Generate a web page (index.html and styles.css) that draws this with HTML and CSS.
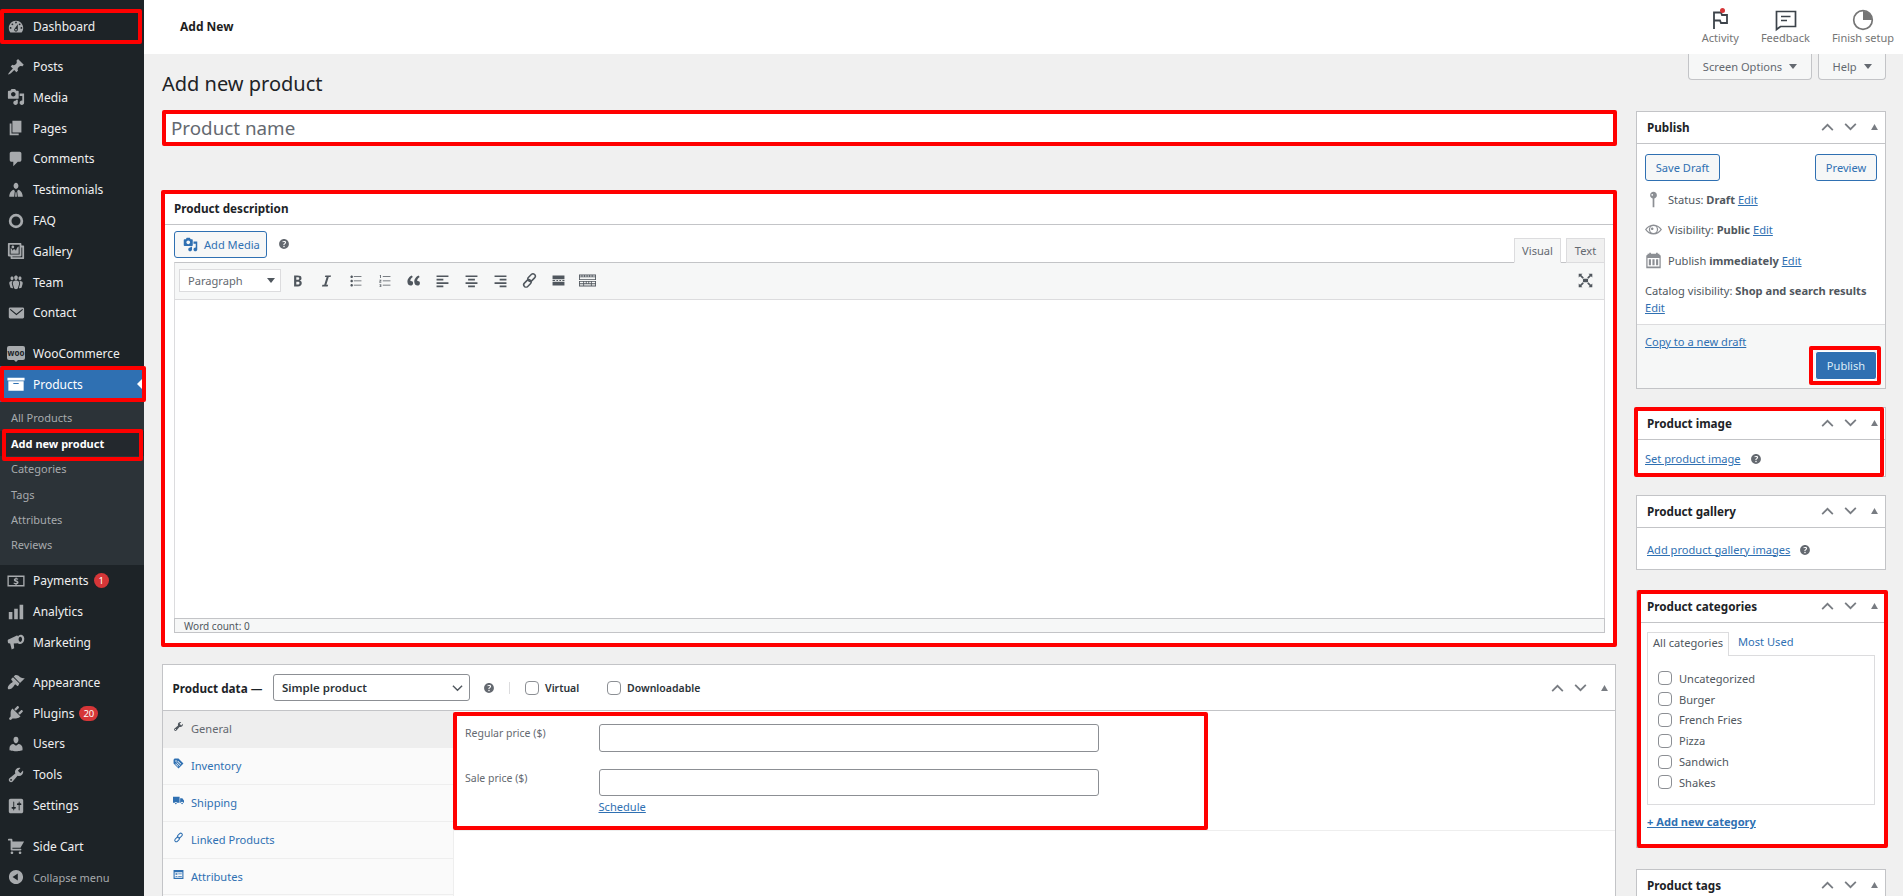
FILE: index.html
```html
<!DOCTYPE html>
<html lang="en">
<head>
<meta charset="utf-8">
<title>Add new product</title>
<link rel="stylesheet" href="styles.css">
</head>
<body>
<svg class="sprite" xmlns="http://www.w3.org/2000/svg">
  <symbol id="i-dashboard" viewBox="0 0 20 20"><path d="M3.76 16h12.48c1.1-1.37 1.76-3.11 1.76-5 0-4.42-3.58-8-8-8s-8 3.58-8 8c0 1.89.66 3.63 1.76 5zM10 4c.55 0 1 .45 1 1s-.45 1-1 1-1-.45-1-1 .45-1 1-1zM6 6c.55 0 1 .45 1 1s-.45 1-1 1-1-.45-1-1 .45-1 1-1zm8 0c.55 0 1 .45 1 1s-.45 1-1 1-1-.45-1-1 .45-1 1-1zm-5.37 5.55L12 7v6c0 1.1-.9 2-2 2s-2-.9-2-2c0-.57.24-1.08.63-1.45zM4 10c.55 0 1 .45 1 1s-.45 1-1 1-1-.45-1-1 .45-1 1-1zm12 0c.55 0 1 .45 1 1s-.45 1-1 1-1-.45-1-1 .45-1 1-1zm-5 3c0-.55-.45-1-1-1s-1 .45-1 1 .45 1 1 1 1-.45 1-1z"/></symbol>
  <symbol id="i-pin" viewBox="0 0 20 20"><path d="M10.44 3.02l1.82-1.82 6.36 6.35-1.83 1.82c-1.05-.68-2.48-.57-3.41.36l-.75.75c-.92.93-1.04 2.35-.35 3.41l-1.83 1.82-2.41-2.41-2.8 2.79c-.42.42-3.38 2.71-3.8 2.29s1.86-3.39 2.28-3.81l2.79-2.79L4.1 9.36l1.83-1.82c1.05.69 2.48.57 3.4-.36l.75-.75c.93-.92 1.05-2.35.36-3.41z"/></symbol>
  <symbol id="i-media" viewBox="0 0 20 20"><path fill-rule="evenodd" d="M13 11V4c0-.55-.45-1-1-1h-1.67L9 1H5L3.67 3H2c-.55 0-1 .45-1 1v7c0 .55.45 1 1 1h10c.55 0 1-.45 1-1zM7 4.5c1.38 0 2.5 1.12 2.5 2.5S8.38 9.5 7 9.5 4.5 8.38 4.5 7 5.62 4.5 7 4.5zM14 6h5v10.5c0 1.38-1.12 2.5-2.5 2.5S14 17.88 14 16.5s1.12-2.5 2.5-2.5c.17 0 .34.02.5.05V9h-3V6zm-4 8.05V13h2v3.5c0 1.38-1.12 2.5-2.5 2.5S7 17.88 7 16.5 8.12 14 9.5 14c.17 0 .34.02.5.05z"/></symbol>
  <symbol id="i-page" viewBox="0 0 20 20"><path d="M6 15V2h10v13H6zm-1 1h8v2H3V5h2v11z"/></symbol>
  <symbol id="i-comment" viewBox="0 0 20 20"><path d="M5 2h9c1.1 0 2 .9 2 2v7c0 1.1-.9 2-2 2h-2l-5 5v-5H5c-1.1 0-2-.9-2-2V4c0-1.1.9-2 2-2z"/></symbol>
  <symbol id="i-person" viewBox="0 0 20 20"><path d="M7.3 5.4C7.3 3.6 8.5 2 10 2s2.7 1.6 2.7 3.4S11.5 8.8 10 8.8 7.3 7.2 7.3 5.4zM2.5 17.5c0-4 2.4-7.3 5-7.8l1.2 1.3-.7 6.5H2.5zm15 0c0-4-2.4-7.3-5-7.8L11.300 11l.7 6.500h5.500zM9 17.500l.4-5h1.200l.4 5H9z"/></symbol>
  <symbol id="i-ring" viewBox="0 0 20 20"><circle cx="10" cy="10" r="6.500" fill="none" stroke="currentColor" stroke-width="3"/></symbol>
  <symbol id="i-gallery" viewBox="0 0 20 20"><path fill-rule="evenodd" d="M16 4h1.960c.570 0 1.040.470 1.040 1.040v12.920c0 .570-.470 1.040-1.040 1.040H5.040C4.470 19 4 18.530 4 17.960V16H2.040C1.470 16 1 15.530 1 14.960V2.040C1 1.470 1.470 1 2.040 1h12.920c.570 0 1.040.470 1.040 1.040V4zM3 14h11V3H3v11zm5-8.500C8 4.670 7.330 4 6.500 4S5 4.670 5 5.500 5.670 7 6.500 7 8 6.330 8 5.500zm2 4.500s1-5 3-5v8H4V7c2 0 2 3 2 3s.330-2 2-2 2 2 2 2zm7 7V6h-1v8.960c0 .570-.470 1.040-1.040 1.040H6v1h11z"/></symbol>
  <symbol id="i-groups" viewBox="0 0 20 20"><path d="M8.030 4.460c-.290 1.280.550 3.460 1.970 3.460 1.410 0 2.250-2.180 1.960-3.460-.220-.980-1.080-1.630-1.960-1.630-.890 0-1.740.650-1.970 1.630zm-4.130.900c-.250 1.080.470 2.930 1.670 2.930s1.920-1.850 1.670-2.930c-.190-.830-.920-1.390-1.670-1.390s-1.480.560-1.670 1.390zm8.860 0c-.250 1.080.470 2.930 1.660 2.930 1.200 0 1.920-1.850 1.670-2.930-.190-.830-.920-1.390-1.670-1.390-.740 0-1.470.560-1.660 1.390zm-.590 11.430l1.250-4.300C14.2 10 12.710 8.470 10 8.470c-2.720 0-4.210 1.530-3.440 4.020l1.260 4.300C8.050 17.510 9 18 10 18c.980 0 1.940-.490 2.170-1.210zm-6.100-7.630c-.490.670-.960 1.830-.420 3.590l1.120 3.790c-.340.200-.770.310-1.200.310-.850 0-1.650-.410-1.850-1.030l-1.070-3.650c-.650-2.110.610-3.400 2.920-3.400.270 0 .540.020.790.060-.100.100-.200.220-.290.330zm8.350-.390c2.310 0 3.580 1.290 2.920 3.400l-1.070 3.650c-.200.620-1 1.030-1.850 1.030-.430 0-.860-.110-1.200-.310l1.110-3.770c.550-1.780.080-2.940-.420-3.610-.080-.110-.180-.230-.280-.330.250-.040.510-.060.790-.060z"/></symbol>
  <symbol id="i-mail" viewBox="0 0 20 20"><path fill-rule="evenodd" d="M19 14.500v-9c0-.830-.670-1.500-1.500-1.500H3.490c-.830 0-1.500.670-1.500 1.500v9c0 .830.670 1.500 1.500 1.500H17.500c.830 0 1.500-.670 1.500-1.500zM4 5.500l6.500 5.300 6.500-5.300.8 1-7.300 6-7.300-6z"/></symbol>
  <symbol id="i-archive" viewBox="0 0 20 20"><path fill-rule="evenodd" d="M19.500 3v3H.5V3h19zM1.500 7h17v10.500h-17V7zM13 10V9H7v1h6z"/></symbol>
  <symbol id="i-money" viewBox="0 0 20 20"><path fill-rule="evenodd" d="M.5 4h19v12H.5V4zm1.500 1.500v9h16v-9H2z"/><path d="M10.700 6v.9c.8.100 1.400.300 1.900.600l-.5 1.200c-.6-.300-1.200-.500-1.800-.500-.500 0-.800.200-.800.500s.300.500 1.100.800c1.400.400 2.200 1 2.200 2.100 0 1-.700 1.700-2.100 1.900v1H9.400v-.9c-.9-.100-1.700-.300-2.200-.700l.5-1.200c.700.400 1.400.600 2.100.600.600 0 1-.200 1-.600 0-.300-.300-.500-1.200-.800C8.300 10.500 7.600 9.900 7.600 8.900c0-1 .700-1.700 1.900-1.900V6h1.200z"/></symbol>
  <symbol id="i-bars" viewBox="0 0 20 20"><path d="M2 10h4v8H2zM8 6.500h4V18H8zM14 2h4v16h-4z"/></symbol>
  <symbol id="i-mega" viewBox="0 0 20 20"><path fill-rule="evenodd" d="M1 7.500l9.500-4.500c1-.3 1.500.2 1.800.8C13 2.500 14.300 1.600 16 2c2.500.6 3.800 3.500 3 6.300s-3.200 4.500-5.500 3.800c-.5-.2-1-.4-1.300-.8l-4.700.300L8 17l-2.800 1.300-1.700-6.700L1.500 11.300C.8 10.500.6 8.500 1 7.500zM14.500 4.200c-1.200.3-1.800 2-1.500 3.700.2 1.200 1 2 1.900 2 1.200-.2 2-1.800 1.800-3.500-.2-1.400-1.200-2.400-2.200-2.200z"/></symbol>
  <symbol id="i-brush" viewBox="0 0 20 20"><path d="M14.480 11.060L7.410 3.990l1.500-1.500c.5-.56 2.300-.47 3.510.32 1.210.8 1.430 1.280 2.910 2.100 1.180.64 2.450 1.260 4.450.85zm-.71.71L6.700 4.700 4.930 6.470c-.39.39-.39 1.020 0 1.410l1.060 1.060c.39.39.39 1.030 0 1.420-.6.6-2 1.100-3.200 2.400C1.500 14 .5 15.500 1 17.500l.5.500c2 .500 3.500-.500 4.700-1.800 1.300-1.200 1.800-2.600 2.400-3.200.38-.4 1-.39 1.400 0l1.060 1.060c.39.39 1.030.39 1.420 0z"/></symbol>
  <symbol id="i-plug" viewBox="0 0 20 20"><path d="M13.110 4.360L9.870 7.600 8 5.730l3.240-3.240c.35-.34 1.050-.2 1.560.32.52.51.66 1.210.31 1.550zm-8 1.770l.91-1.120 9.010 9.010-1.190.84c-.71.71-2.630 1.160-3.820 1.160H6.140L4.900 17.260c-.59.59-1.540.59-2.120 0-.59-.58-.59-1.530 0-2.120l1.240-1.240v-3.880c0-1.130.4-3.190 1.090-3.890zm7.260 3.970l3.240-3.240c.34-.35 1.040-.21 1.550.31.52.51.66 1.210.31 1.550l-3.240 3.250z"/></symbol>
  <symbol id="i-user" viewBox="0 0 20 20"><path d="M10 9.250c-2.270 0-2.730-3.440-2.730-3.440C7 4.020 7.820 2 9.970 2c2.160 0 2.980 2.020 2.710 3.810 0 0-.41 3.440-2.680 3.440zm0 2.570L12.720 10c2.390 0 4.520 2.330 4.520 4.530v2.490s-3.650 1.130-7.240 1.130c-3.650 0-7.240-1.130-7.240-1.130v-2.490c0-2.250 1.940-4.480 4.470-4.480z"/></symbol>
  <symbol id="i-wrench" viewBox="0 0 20 20"><path fill-rule="evenodd" d="M16.680 9.770c-1.340 1.340-3.300 1.670-4.950.99l-5.410 6.520c-.99.99-2.590.99-3.580 0s-.99-2.590 0-3.570l6.520-5.420c-.68-1.650-.35-3.610.99-4.950 1.280-1.280 3.120-1.620 4.720-1.060l-2.890 2.890 2.820 2.820 2.860-2.870c.53 1.580.18 3.390-1.080 4.650zM3.810 16.210c.4.39 1.040.39 1.430 0 .4-.4.4-1.040 0-1.430-.39-.4-1.030-.4-1.430 0-.39.39-.39 1.030 0 1.430z"/></symbol>
  <symbol id="i-settings" viewBox="0 0 20 20"><path fill-rule="evenodd" d="M18 16V4c0-1.100-.9-2-2-2H4c-1.100 0-2 .9-2 2v12c0 1.100.9 2 2 2h12c1.100 0 2-.9 2-2zM8 11h1c.55 0 1 .45 1 1s-.45 1-1 1H8v1.500c0 .28-.22.5-.5.5s-.5-.22-.5-.5V13H6c-.55 0-1-.45-1-1s.45-1 1-1h1V5.500c0-.28.22-.5.5-.5s.5.22.5.5V11zm5-2h-1c-.55 0-1-.45-1-1s.45-1 1-1h1V5.500c0-.28.22-.5.5-.5s.5.22.5.5V7h1c.55 0 1 .45 1 1s-.45 1-1 1h-1v5.500c0 .28-.22.5-.5.5s-.5-.22-.5-.5V9z"/></symbol>
  <symbol id="i-cart" viewBox="0 0 20 20"><path d="M6 13h9c.55 0 1 .45 1 1s-.45 1-1 1H5c-.55 0-1-.45-1-1V4H2c-.55 0-1-.45-1-1s.45-1 1-1h3c.55 0 1 .45 1 1v2h13l-4 7H6v1zm-.5 3c.83 0 1.500.67 1.500 1.500S6.330 19 5.500 19 4 18.330 4 17.500 4.670 16 5.500 16zm9 0c.83 0 1.500.67 1.500 1.500s-.67 1.500-1.500 1.500-1.500-.67-1.500-1.500.67-1.500 1.500-1.500z"/></symbol>
  <symbol id="i-collapse" viewBox="0 0 20 20"><path fill-rule="evenodd" d="M10 2.160c4.330 0 7.840 3.510 7.840 7.840s-3.510 7.840-7.840 7.840S2.160 14.330 2.160 10 5.710 2.160 10 2.160zm2 11.720V6.120L6.180 9.970z"/></symbol>
  <symbol id="i-help" viewBox="0 0 20 20"><path fill-rule="evenodd" d="M17 10c0-3.870-3.140-7-7-7-3.870 0-7 3.130-7 7s3.130 7 7 7c3.860 0 7-3.130 7-7zm-6.300 1.480H9.140v-.43c0-.38.08-.7.24-.98s.46-.57.88-.89c.41-.29.68-.53.81-.71.14-.18.2-.39.2-.62 0-.25-.09-.44-.28-.58-.19-.13-.45-.19-.79-.19-.58 0-1.250.19-2 .57l-.64-1.280c.87-.49 1.800-.74 2.770-.74.81 0 1.450.2 1.920.58.48.39.71.91.71 1.550 0 .43-.09.8-.29 1.110-.19.32-.57.67-1.110 1.060-.38.28-.61.49-.71.63-.1.15-.15.34-.15.57v.35zm-1.470 2.740c-.18-.17-.27-.42-.27-.73 0-.33.08-.58.26-.75s.43-.25.77-.25c.32 0 .57.09.75.26s.27.42.27.74c0 .3-.09.55-.27.72-.18.18-.43.27-.75.27-.33 0-.58-.09-.76-.26z"/></symbol>
  <symbol id="i-bold" viewBox="0 0 20 20"><path fill-rule="evenodd" d="M6 4v13h4.540c1.370 0 2.460-.33 3.260-1 .8-.66 1.200-1.580 1.200-2.770 0-.84-.17-1.510-.51-2.010s-.9-.85-1.670-1.030v-.09c.57-.1 1.020-.4 1.360-.9s.51-1.130.51-1.910c0-1.140-.39-1.980-1.170-2.510C12.750 4.270 11.500 4 9.780 4H6zm2.570 5.150V6.260h1.360c.73 0 1.270.11 1.610.32.34.22.51.58.51 1.070 0 .54-.16.92-.47 1.150s-.82.35-1.510.35h-1.500zm0 2.190h1.600c1.440 0 2.160.53 2.160 1.610 0 .6-.17 1.050-.51 1.340s-.86.43-1.570.43H8.570v-3.380z"/></symbol>
  <symbol id="i-italic" viewBox="0 0 20 20"><path d="M14.780 6h-2.130l-2.800 9h2.120l-.62 2H4.600l.62-2h2.140l2.800-9H8.030l.62-2h6.750z"/></symbol>
  <symbol id="i-ul" viewBox="0 0 20 20"><path d="M5.500 7C4.670 7 4 6.330 4 5.500 4 4.680 4.670 4 5.500 4 6.320 4 7 4.680 7 5.500 7 6.330 6.320 7 5.500 7zM8 5h9v1H8V5zm-2.500 7c-.83 0-1.500-.67-1.500-1.500C4 9.680 4.670 9 5.500 9c.82 0 1.500.68 1.500 1.500 0 .83-.68 1.500-1.500 1.500zM8 10h9v1H8v-1zm-2.500 7c-.83 0-1.500-.67-1.500-1.500 0-.82.67-1.500 1.500-1.500.82 0 1.500.68 1.500 1.500 0 .83-.68 1.500-1.500 1.500zM8 15h9v1H8v-1z"/></symbol>
  <symbol id="i-ol" viewBox="0 0 20 20"><path d="M8 5h9v1H8zM8 10h9v1H8zM8 15h9v1H8zM4.500 3.500h1.200V7H4.800V4.500h-.3zM4 9.200h2.200v2H5v.800h1.300v.700H4v-1.900h1.200v-.9H4zM4 14.300h2.200v3.400H4V17h1.300v-.7H4.500v-.6h.800V15H4z"/></symbol>
  <symbol id="i-quote" viewBox="0 0 20 20"><path d="M9.490 13.220c0-.74-.2-1.380-.61-1.900-.62-.78-1.830-.88-2.530-.72-.29-1.650 1.110-3.750 2.920-4.650L7.880 4c-2.730 1.300-5.420 4.280-4.960 8.050C3.210 14.430 4.590 16 6.540 16c.85 0 1.560-.25 2.120-.75s.83-1.180.83-2.030zm8.050 0c0-.74-.2-1.380-.61-1.900-.63-.78-1.830-.88-2.530-.72-.29-1.650 1.110-3.750 2.920-4.650L15.930 4c-2.730 1.300-5.410 4.280-4.950 8.050.29 2.380 1.660 3.950 3.610 3.950.85 0 1.560-.25 2.120-.75s.83-1.180.83-2.030z"/></symbol>
  <symbol id="i-al" viewBox="0 0 20 20"><path d="M3 4h14v2H3zM3 8h8v2H3zM3 12h14v2H3zM3 16h8v2H3z"/></symbol>
  <symbol id="i-ac" viewBox="0 0 20 20"><path d="M3 4h14v2H3zM6 8h8v2H6zM3 12h14v2H3zM6 16h8v2H6z"/></symbol>
  <symbol id="i-ar" viewBox="0 0 20 20"><path d="M3 4h14v2H3zM9 8h8v2H9zM3 12h14v2H3zM9 16h8v2H9z"/></symbol>
  <symbol id="i-link" viewBox="0 0 20 20"><g fill="none" stroke="currentColor" stroke-width="1.800"><rect x="1.700" y="7" width="10" height="5.500" rx="2.750" transform="rotate(-45 6.700 9.750) translate(-2 3.200)"/><rect x="8.300" y="7.500" width="10" height="5.500" rx="2.750" transform="rotate(-45 13.300 10.250) translate(2 -3.200)"/></g></symbol>
  <symbol id="i-more" viewBox="0 0 20 20"><path d="M3 4h14v4.500H3zM3 11.500h14V16H3zM3 9.500h3v1H3zM7.500 9.500h2v1h-2zM11 9.500h2v1h-2zM14.500 9.500H17v1h-2.500z"/></symbol>
  <symbol id="i-sink" viewBox="0 0 20 20"><path fill-rule="evenodd" d="M0 3h20v6.500H0V3zm1 1v1.300h2V4H1zm3 0v1.300h2V4H4zm3 0v1.300h2V4H7zm3 0v1.300h2V4h-2zm3 0v1.300h2V4h-2zm3 0v1.300h3V4h-3zM1 6.300v2.200h18V6.300H1zM0 10.500h20V17H0v-6.500zm1 1v1.800h4v-1.800H1zm5 0v1.800h2v-1.800H6zm3 0v1.800h2v-1.800H9zm3 0v1.800h2v-1.800h-2zm3 0v1.800h4v-1.800h-4zM1 14.300V16h4v-1.700H1zm5 0V16h8v-1.700H6zm9 0V16h4v-1.700h-4z"/></symbol>
  <symbol id="i-full" viewBox="0 0 20 20"><path d="M7 8h6v4H7zM2 2h4.500L5 3.600 8 6.600 6.600 8 3.600 5 2 6.500zM18 2v4.500L16.400 5l-3 3L12 6.600l3-3L13.500 2zM2 18v-4.500L3.600 15l3-3L8 13.400l-3 3L6.500 18zM18 18h-4.500l1.500-1.600-3-3L13.400 12l3 3 1.600-1.500z"/></symbol>
  <symbol id="i-mappin" viewBox="0 0 20 20"><path d="M10 1c2.200 0 4 1.800 4 4 0 1.900-1.300 3.400-3 3.900V19H9V8.900C7.300 8.400 6 6.900 6 5c0-2.200 1.800-4 4-4zM8.500 3.500a1 1 0 0 0 0 2 1 1 0 0 0 0-2z" fill-rule="evenodd"/></symbol>
  <symbol id="i-eye" viewBox="0 0 20 20"><path fill-rule="evenodd" d="M10 4c4.200 0 7.600 2.600 10 6-2.400 3.400-5.800 6-10 6S2.400 13.400 0 10c2.400-3.400 5.800-6 10-6zM6 6.400C4.300 7.200 2.900 8.500 1.800 10c1.100 1.500 2.500 2.800 4.200 3.600C5 12.500 4.500 11.300 4.500 10S5 7.500 6 6.400zm8 0c1 1.100 1.500 2.300 1.500 3.600s-.5 2.500-1.500 3.600c1.700-.8 3.100-2.100 4.200-3.600-1.100-1.500-2.500-2.800-4.200-3.600zM10 6a4 4 0 1 0 0 8 4 4 0 0 0 0-8zM8.500 7.500c.8 0 1.500.7 1.500 1.500S9.300 10.500 8.500 10.500 7 9.800 7 9s.7-1.500 1.500-1.500z"/></symbol>
  <symbol id="i-cal" viewBox="0 0 20 20"><path fill-rule="evenodd" d="M3 2h2V1h2v1h6V1h2v1h2v1.500c1 0 1.500.5 1.500 1.500v14H1.500V5c0-1 .5-1.500 1.500-1.500V2zM3 7v10h14V7H3zm1.500 1.500h2.500v7H4.500v-7zm4.250 0h2.500v7h-2.500v-7zm4.250 0h2.500v7H13v-7z"/></symbol>
  <symbol id="i-tag" viewBox="0 0 20 20"><path fill-rule="evenodd" d="M10 1l9 9-9 9-9-9V3l1-1 1-1h7zM5.500 4a1.500 1.500 0 1 0 0 3 1.500 1.500 0 0 0 0-3zM9 5l-1 1 6 6 1-1zM7 7.500l-1 1 6 6 1-1zM5 10l-1 1 5 5 1-1z"/></symbol>
  <symbol id="i-truck" viewBox="0 0 20 20"><path d="M0 3h12v11H7.500a2.500 2.500 0 0 0-4.500 0H0zM13 6h4l3 4v4h-1.200a2.500 2.500 0 0 0-4.600 0H13zM5.200 14a1.500 1.500 0 1 1 0 3 1.500 1.500 0 0 1 0-3zM16.500 14a1.500 1.500 0 1 1 0 3 1.500 1.500 0 0 1 0-3z"/></symbol>
  <symbol id="i-attr" viewBox="0 0 20 20"><path fill-rule="evenodd" d="M1 2h18v16H1V2zm2 4v10h14V6H3zm1.500 1.500h3.500v3H4.500v-3zm5 .5H16v1.500H9.500V8zm-5 4.500h3.500V14H4.500v-1.500zm5 0H16V14H9.500v-1.500z"/></symbol>
  <symbol id="i-flag" viewBox="0 0 24 24"><path d="M6 21V4.500h7l1 2.500h5v8h-6l-1-2.500H6" fill="none" stroke="currentColor" stroke-width="1.800"/></symbol>
  <symbol id="i-feedback" viewBox="0 0 24 24"><path d="M3.500 21.500V3.500h19v15H7.500zM8 8.500h9.500M8 12.500h6" fill="none" stroke="currentColor" stroke-width="1.700"/></symbol>
  <symbol id="i-finish" viewBox="0 0 24 24"><circle cx="12" cy="12" r="9.300" fill="none" stroke="currentColor" stroke-width="1.700"/><path d="M12 3v9h9c0-5-4-9-9-9z" fill="currentColor"/></symbol>
  <symbol id="i-up" viewBox="0 0 14 9"><path d="M1 8l6-6 6 6" fill="none" stroke="currentColor" stroke-width="2"/></symbol>
  <symbol id="i-down" viewBox="0 0 14 9"><path d="M1 1l6 6 6-6" fill="none" stroke="currentColor" stroke-width="2"/></symbol>
  <symbol id="i-tri" viewBox="0 0 8 7"><path d="M4 0l4 7H0z"/></symbol>
  <symbol id="i-chev" viewBox="0 0 12 8"><path d="M1 1.500l5 5 5-5" fill="none" stroke="currentColor" stroke-width="1.500"/></symbol>
</svg>

<div class="app">
  <nav class="sidebar">
    <ul class="menu">
      <li class="item item-dash frame frame-dash"><svg class="mi"><use href="#i-dashboard"/></svg><span>Dashboard</span></li>
      <li class="item"><svg class="mi"><use href="#i-pin"/></svg><span>Posts</span></li>
      <li class="item"><svg class="mi"><use href="#i-media"/></svg><span>Media</span></li>
      <li class="item"><svg class="mi"><use href="#i-page"/></svg><span>Pages</span></li>
      <li class="item"><svg class="mi"><use href="#i-comment"/></svg><span>Comments</span></li>
      <li class="item"><svg class="mi"><use href="#i-person"/></svg><span>Testimonials</span></li>
      <li class="item"><svg class="mi"><use href="#i-ring"/></svg><span>FAQ</span></li>
      <li class="item"><svg class="mi"><use href="#i-gallery"/></svg><span>Gallery</span></li>
      <li class="item"><svg class="mi"><use href="#i-groups"/></svg><span>Team</span></li>
      <li class="item item-contact"><svg class="mi"><use href="#i-mail"/></svg><span>Contact</span></li>
      <li class="item sep"><span class="woo"><span class="woo-text">woo</span></span><span>WooCommerce</span></li>
      <li class="item item-current frame frame-products"><svg class="mi"><use href="#i-archive"/></svg><span>Products</span><i class="current-arrow"></i></li>
      <li class="submenu">
        <a class="subitem">All Products</a>
        <a class="subitem subitem-on frame frame-add">Add new product</a>
        <a class="subitem">Categories</a>
        <a class="subitem">Tags</a>
        <a class="subitem">Attributes</a>
        <a class="subitem">Reviews</a>
      </li>
      <li class="item item-pay"><svg class="mi"><use href="#i-money"/></svg><span>Payments</span><b class="badge">1</b></li>
      <li class="item"><svg class="mi"><use href="#i-bars"/></svg><span>Analytics</span></li>
      <li class="item item-mkt"><svg class="mi"><use href="#i-mega"/></svg><span>Marketing</span></li>
      <li class="item sep"><svg class="mi"><use href="#i-brush"/></svg><span>Appearance</span></li>
      <li class="item"><svg class="mi"><use href="#i-plug"/></svg><span>Plugins</span><b class="badge">20</b></li>
      <li class="item"><svg class="mi"><use href="#i-user"/></svg><span>Users</span></li>
      <li class="item"><svg class="mi"><use href="#i-wrench"/></svg><span>Tools</span></li>
      <li class="item"><svg class="mi"><use href="#i-settings"/></svg><span>Settings</span></li>
      <li class="item sep"><svg class="mi"><use href="#i-cart"/></svg><span>Side Cart</span></li>
      <li class="item item-collapse"><svg class="mi"><use href="#i-collapse"/></svg><span>Collapse menu</span></li>
    </ul>
  </nav>

  <div class="main">
    <header class="topbar">
      <div class="topbar-title">Add New</div>
      <div class="activity">
        <div class="activity-item activity-flag"><svg class="ai"><use href="#i-flag"/></svg><i class="dot"></i><span>Activity</span></div>
        <div class="activity-item"><svg class="ai"><use href="#i-feedback"/></svg><span>Feedback</span></div>
        <div class="activity-item"><svg class="ai ai-muted"><use href="#i-finish"/></svg><span>Finish setup</span></div>
      </div>
    </header>

    <div class="page-head">
      <h1 class="page-title">Add new product</h1>
      <div class="meta-tabs">
        <div class="meta-tab meta-tab-screen">Screen Options<i class="caret"></i></div>
        <div class="meta-tab meta-tab-help">Help<i class="caret"></i></div>
      </div>
    </div>

    <div class="columns">
      <div class="col-main">
        <div class="name-box"><input class="name-input" type="text" placeholder="Product name"></div>

        <section class="desc-box">
          <h2 class="desc-title">Product description</h2>
          <div class="editor">
            <div class="editor-top">
              <button class="btn btn-media"><svg class="btn-icon"><use href="#i-media"/></svg>Add Media</button>
              <svg class="help help-media"><use href="#i-help"/></svg>
              <div class="editor-tabs">
                <span class="etab etab-on">Visual</span>
                <span class="etab">Text</span>
              </div>
            </div>
            <div class="toolbar">
              <div class="format-select">Paragraph<i class="caret caret-dark"></i></div>
              <svg class="ti ti-first"><use href="#i-bold"/></svg>
              <svg class="ti"><use href="#i-italic"/></svg>
              <svg class="ti"><use href="#i-ul"/></svg>
              <svg class="ti"><use href="#i-ol"/></svg>
              <svg class="ti"><use href="#i-quote"/></svg>
              <svg class="ti"><use href="#i-al"/></svg>
              <svg class="ti"><use href="#i-ac"/></svg>
              <svg class="ti"><use href="#i-ar"/></svg>
              <svg class="ti"><use href="#i-link"/></svg>
              <svg class="ti"><use href="#i-more"/></svg>
              <svg class="ti"><use href="#i-sink"/></svg>
              <svg class="ti ti-full"><use href="#i-full"/></svg>
            </div>
            <div class="editor-body"></div>
            <div class="editor-status">Word count: 0</div>
          </div>
        </section>

        <section class="data-box">
          <div class="data-head">
            <strong class="data-label">Product data —</strong>
            <div class="select-wrap"><select class="type-select"><option>Simple product</option></select><svg class="select-chev"><use href="#i-chev"/></svg></div>
            <svg class="help help-data"><use href="#i-help"/></svg>
            <i class="vline"></i>
            <label class="check-label check-virtual"><input class="check" type="checkbox">Virtual</label>
            <label class="check-label check-down"><input class="check" type="checkbox">Downloadable</label>
            <div class="box-arrows data-arrows"><svg class="ar ar-up"><use href="#i-up"/></svg><svg class="ar ar-down"><use href="#i-down"/></svg><svg class="tri"><use href="#i-tri"/></svg></div>
          </div>
          <div class="data-body">
            <ul class="data-tabs">
              <li class="dtab dtab-on"><svg class="di"><use href="#i-wrench"/></svg>General</li>
              <li class="dtab"><svg class="di"><use href="#i-tag"/></svg>Inventory</li>
              <li class="dtab"><svg class="di"><use href="#i-truck"/></svg>Shipping</li>
              <li class="dtab"><svg class="di"><use href="#i-link"/></svg>Linked Products</li>
              <li class="dtab"><svg class="di"><use href="#i-attr"/></svg>Attributes</li>
            </ul>
            <div class="data-panel">
              <div class="price-group frame frame-price">
                <div class="price-row"><label class="price-label">Regular price ($)</label><input class="price-input" type="text"></div>
                <div class="price-row price-row-sale"><label class="price-label">Sale price ($)</label><input class="price-input price-input-sale" type="text"></div>
                <a class="link schedule">Schedule</a>
              </div>
            </div>
          </div>
        </section>
      </div>

      <aside class="col-side">
        <section class="box box-publish">
          <div class="box-head"><h3 class="box-title">Publish</h3><div class="box-arrows"><svg class="ar ar-up"><use href="#i-up"/></svg><svg class="ar ar-down"><use href="#i-down"/></svg><svg class="tri"><use href="#i-tri"/></svg></div></div>
          <div class="publish-body">
            <div class="publish-btns"><button class="btn">Save Draft</button><button class="btn">Preview</button></div>
            <div class="misc"><svg class="pi"><use href="#i-mappin"/></svg><span>Status: <b>Draft</b> <a class="link">Edit</a></span></div>
            <div class="misc"><svg class="pi"><use href="#i-eye"/></svg><span>Visibility: <b>Public</b> <a class="link">Edit</a></span></div>
            <div class="misc"><svg class="pi"><use href="#i-cal"/></svg><span>Publish <b>immediately</b> <a class="link">Edit</a></span></div>
            <div class="catalog">Catalog visibility: <b>Shop and search results</b><br><a class="link">Edit</a></div>
          </div>
          <div class="publish-actions">
            <a class="link copy">Copy to a new draft</a>
            <div class="publish-row"><button class="btn-primary">Publish</button></div>
          </div>
        </section>

        <section class="box box-image frame frame-image">
          <div class="box-head"><h3 class="box-title">Product image</h3><div class="box-arrows"><svg class="ar ar-up"><use href="#i-up"/></svg><svg class="ar ar-down"><use href="#i-down"/></svg><svg class="tri"><use href="#i-tri"/></svg></div></div>
          <div class="image-body"><a class="link">Set product image</a><svg class="help help-side"><use href="#i-help"/></svg></div>
        </section>

        <section class="box box-gallery">
          <div class="box-head"><h3 class="box-title">Product gallery</h3><div class="box-arrows"><svg class="ar ar-up"><use href="#i-up"/></svg><svg class="ar ar-down"><use href="#i-down"/></svg><svg class="tri"><use href="#i-tri"/></svg></div></div>
          <div class="gallery-body"><a class="link">Add product gallery images</a><svg class="help help-side"><use href="#i-help"/></svg></div>
        </section>

        <section class="box box-cats frame frame-cats">
          <div class="box-head"><h3 class="box-title">Product categories</h3><div class="box-arrows"><svg class="ar ar-up"><use href="#i-up"/></svg><svg class="ar ar-down"><use href="#i-down"/></svg><svg class="tri"><use href="#i-tri"/></svg></div></div>
          <div class="cats-body">
            <div class="cat-tabs"><span class="cat-tab cat-tab-on">All categories</span><a class="cat-tab link-plain">Most Used</a></div>
            <ul class="cat-list">
              <li class="cat"><input class="check" type="checkbox">Uncategorized</li>
              <li class="cat"><input class="check" type="checkbox">Burger</li>
              <li class="cat"><input class="check" type="checkbox">French Fries</li>
              <li class="cat"><input class="check" type="checkbox">Pizza</li>
              <li class="cat"><input class="check" type="checkbox">Sandwich</li>
              <li class="cat"><input class="check" type="checkbox">Shakes</li>
            </ul>
            <a class="link add-cat">+ Add new category</a>
          </div>
        </section>

        <section class="box box-tags">
          <div class="box-head"><h3 class="box-title">Product tags</h3><div class="box-arrows"><svg class="ar ar-up"><use href="#i-up"/></svg><svg class="ar ar-down"><use href="#i-down"/></svg><svg class="tri"><use href="#i-tri"/></svg></div></div>
        </section>
      </aside>
    </div>
  </div>
</div>
</body>
</html>
```
FILE: styles.css
```css
* { box-sizing: border-box; }
html, body { margin: 0; height: 100%; overflow: hidden; }
body { font-family: "Noto Sans", "Open Sans", sans-serif; font-size: 11.1px; color: #50575e; background: #f0f0f0; }
ul { list-style: none; margin: 0; padding: 0; }
h1, h2, h3 { margin: 0; }
button, input, select { font-family: inherit; }
a { cursor: pointer; }
.sprite { position: absolute; width: 0; height: 0; overflow: hidden; }
.app { display: flex; height: 100vh; overflow: hidden; }

/* annotation frames */
.frame { position: relative; }
.frame::after { content: ""; position: absolute; border: 4px solid #f00; border-radius: 2px; pointer-events: none; }
.frame-dash::after { inset: 0 2px 0 0; }
.frame-products::after { inset: 0 -2px 0 0; }
.frame-add::after { inset: -1.5px 1px -5px 2px; }
.frame-price::after { left: -1px; top: 1px; bottom: 0; width: 747px; }
.frame-image::after { inset: -1px 1px -1px -3px; }
.frame-cats::after { inset: -1px -3px -1px 0; }

/* sidebar */
.sidebar { width: 144px; flex: none; background: #1d2327; color: #f0f0f1; font-size: 12px; position: relative; z-index: 2; }
.menu { padding-top: 9px; }
.item { height: 30.8px; display: flex; align-items: center; padding-left: 7px; gap: 8px; white-space: nowrap; }
.item-dash { height: 35px; margin-bottom: 7.2px; }
.item-contact { margin-bottom: -0.6px; }
.item-pay { margin-top: 0.8px; }
.item-mkt { margin-bottom: -0.8px; }
.sep { margin-top: 10px; }
.mi { width: 18px; height: 18px; flex: none; fill: #a7aaad; color: #a7aaad; }
.item-current { height: 36px; margin-top: -2.6px; padding-top: 1px; background: #2f70b2; color: #fff; }
.item-current .mi { fill: #fff; }
.current-arrow { position: absolute; right: 2px; top: 13px; border: 5px solid transparent; border-right-color: #fff; border-left: 0; }
.woo { width: 18px; height: 14px; background: #a7aaad; border-radius: 2px; flex: none; display: flex; align-items: center; justify-content: center; position: relative; }
.woo::after { content: ""; position: absolute; left: 6px; top: 13px; border: 3px solid transparent; border-top-color: #a7aaad; }
.woo-text { color: #1d2327; font-size: 8px; font-weight: 700; line-height: 1; }
.submenu { background: #2c3338; height: 162.6px; padding-top: 3.3px; }
.subitem { display: flex; align-items: center; height: 25.4px; padding-left: 11px; color: #a7aaad; font-size: 11px; }
.subitem-on { color: #fff; font-weight: 700; background: #23282d; }
.badge { background: #d63638; color: #fff; font-size: 9.5px; font-weight: 400; min-width: 15px; height: 15px; line-height: 15px; text-align: center; border-radius: 8px; padding: 0 4px; margin-left: -3px; }
.item-collapse { color: #a7aaad; font-size: 11px; }

/* main */
.main { flex: 1; min-width: 0; }
.topbar { height: 54px; background: #fff; display: flex; align-items: flex-start; justify-content: space-between; }
.topbar-title { font-weight: 700; color: #1e1e1e; font-size: 12px; line-height: 53px; padding-left: 36px; }
.activity { display: flex; gap: 22px; padding: 8px 9px 0 0; }
.activity-item { display: flex; flex-direction: column; align-items: center; color: #757575; font-size: 11px; line-height: 16px; position: relative; }
.ai { width: 24px; height: 24px; color: #3c434a; margin-bottom: -2px; }
.ai-muted { color: #757575; }
.dot { position: absolute; width: 5px; height: 5px; border-radius: 50%; background: #d63638; left: 18px; top: 0; }

.page-head { display: flex; justify-content: space-between; align-items: flex-start; height: 57px; padding: 0 17px 0 18px; }
.page-title { font-size: 20px; font-weight: 400; color: #1d2327; line-height: 30px; margin-top: 15px; }
.meta-tabs { display: flex; gap: 6px; }
.meta-tab { height: 26px; background: #f6f7f7; border: 1px solid #c3c4c7; border-top: 0; border-radius: 0 0 4px 4px; display: flex; align-items: center; justify-content: center; color: #646970; gap: 7px; padding-bottom: 1px; }
.meta-tab-screen { width: 124px; }
.meta-tab-help { width: 68px; }
.caret { width: 0; height: 0; border: 4px solid transparent; border-bottom: 0; border-top: 5px solid #646970; }

.columns { display: grid; grid-template-columns: 1454px 250px; gap: 20px; padding: 0 17px 0 18px; }
.col-main { min-width: 0; }
.name-box { height: 36px; margin: -1px -1px 0 0; border: 4px solid #f00; border-radius: 2px; background: #fff; }
.name-input { display: block; width: 100%; height: 100%; border: 0; outline: 0; background: transparent; padding: 0 0 0 5px; font-size: 18.8px; color: #1d2327; }
.name-input::placeholder { color: #646970; opacity: 1; }

.desc-box { margin: 44px -1px 0 -1px; border: 4px solid #f00; border-radius: 2px; background: #fff; height: 457px; }
.desc-title { height: 31px; line-height: 28px; padding-left: 9px; font-size: 11.7px; font-weight: 700; color: #1d2327; border-bottom: 1px solid #c3c4c7; }
.editor { padding: 0 8px 0 9px; }
.editor-top { height: 37px; display: flex; align-items: flex-start; position: relative; }
.btn { height: 27px; border: 1px solid #2f70b2; border-radius: 3px; background: #f6f7f7; color: #2f70b2; font-size: 11.1px; padding: 0 8px; display: inline-flex; align-items: center; }
.btn-media { margin-top: 6px; width: 93px; padding: 0 0 0 8px; }
.btn-icon { width: 15px; height: 15px; fill: #2f70b2; margin-right: 6px; flex: none; }
.help { width: 14px; height: 14px; fill: #646970; flex: none; }
.help-media { margin: 12px 0 0 10px; }
.editor-tabs { margin-left: auto; margin-top: 12px; display: flex; gap: 5px; position: relative; top: 1px; }
.etab { height: 25px; line-height: 23px; border: 1px solid #dcdcde; background: #f0f0f0; text-align: center; color: #646970; font-size: 11.1px; width: 39px; }
.etab-on { width: 47px; background: #f6f7f7; border-bottom-color: #f6f7f7; }
.toolbar { height: 38px; background: #f6f7f7; border: 1px solid #dcdcde; border-top-color: #c3c4c7; display: flex; align-items: flex-start; padding: 6px 0 0 4px; }
.format-select { width: 102px; height: 23px; background: #fff; border: 1px solid #dcdcde; display: flex; align-items: center; justify-content: space-between; padding: 0 5px 0 8px; color: #646970; font-size: 11.1px; flex: none; }
.caret-dark { border-top-color: #50575e; }
.ti { width: 17px; height: 17px; fill: #50575e; color: #50575e; margin: 3px 0 0 12px; flex: none; }
.ti-first { margin-left: 8px; }
.ti-full { margin: 3px 10px 0 auto; }
.editor-body { height: 318px; background: #fff; border-left: 1px solid #dcdcde; border-right: 1px solid #dcdcde; }
.editor-status { height: 15px; line-height: 14px; background: #f6f7f7; border: 1px solid #c3c4c7; padding-left: 9px; font-size: 10px; color: #50575e; }

.data-box { margin-top: 17px; background: #fff; border: 1px solid #c3c4c7; height: 300px; }
.data-head { height: 46px; border-bottom: 1px solid #c3c4c7; display: flex; align-items: center; padding-left: 9.5px; }
.data-label { width: 100.5px; font-size: 11.7px; color: #1d2327; font-weight: 700; flex: none; white-space: nowrap; }
.select-wrap { position: relative; flex: none; }
.type-select { display: block; width: 197px; height: 27px; border: 1px solid #8c8f94; border-radius: 3px; background: #fff; appearance: none; padding: 0 0 0 8px; font-size: 11.5px; font-weight: 600; color: #2c3338; }
.select-chev { position: absolute; right: 7px; top: 10px; width: 11px; height: 8px; color: #50575e; }
.help-data { margin-left: 11.5px; }
.vline { width: 1px; height: 12px; background: #dcdcde; margin-left: 13.5px; }
.check { appearance: none; width: 14px; height: 14px; margin: 0; border: 1px solid #8c8f94; border-radius: 4px; background: #fff; flex: none; }
.check-label { display: flex; align-items: center; gap: 6px; font-weight: 600; color: #2c3338; font-size: 10.5px; }
.check-virtual { margin-left: 15px; width: 82px; }
.box-arrows { margin-left: auto; display: flex; align-items: center; color: #787c82; fill: #787c82; }
.ar { width: 13px; height: 8px; color: #787c82; }
.ar-up { margin-right: 10px; }
.ar-down { margin-right: 14px; }
.tri { width: 7px; height: 6px; fill: #787c82; margin-right: 7px; }

.data-body { display: flex; }
.data-tabs { width: 291px; flex: none; background: #fafafa; border-right: 1px solid #eee; height: 190px; }
.dtab { height: 36.9px; border-bottom: 1px solid #eee; display: flex; align-items: center; padding-left: 10px; gap: 7px; color: #2f70b2; fill: #2f70b2; font-size: 11.1px; }
.dtab-on { background: #eee; color: #646970; fill: #50575e; }
.di { width: 11px; height: 11px; color: inherit; flex: none; margin-top: -4px; }
.data-panel { flex: 1; min-width: 0; }
.price-group { border-bottom: 1px solid #eee; height: 120px; padding: 13px 0 0 11px; }
.price-row { display: flex; align-items: flex-start; }
.price-row-sale { margin-top: 17px; }
.price-label { width: 133.5px; font-size: 10.5px; color: #646970; flex: none; padding-top: 2px; line-height: 15px; }
.price-input { width: 500px; height: 28px; border: 1px solid #8c8f94; border-radius: 3px; background: #fff; flex: none; }
.price-input-sale { height: 27px; }
.link { color: #2f70b2; text-decoration: underline; }
.schedule { display: block; margin: 2px 0 0 133.5px; line-height: 17px; }

/* side */
.col-side { min-width: 0; }
.box { background: #fff; border: 1px solid #c3c4c7; margin-bottom: 18px; }
.box-head { height: 32px; border-bottom: 1px solid #c3c4c7; display: flex; align-items: center; padding: 0 0 1.5px 10px; }
.box-title { font-size: 11.7px; font-weight: 700; color: #1d2327; }
.box-publish { margin-bottom: 18.5px; }
.publish-body { padding: 10px 8px 7.5px; }
.publish-btns { display: flex; justify-content: space-between; }
.publish-btns .btn { padding: 0; justify-content: center; }
.publish-btns .btn:first-child { width: 75px; }
.publish-btns .btn:last-child { width: 62px; }
.misc { display: flex; align-items: center; gap: 6px; height: 17px; margin-top: 13.5px; }
.misc:nth-child(2) { margin-top: 9.5px; }
.pi { width: 17px; height: 17px; fill: #8c8f94; flex: none; }
.catalog { line-height: 17px; margin-top: 13.5px; white-space: nowrap; }
.publish-actions { background: #f6f7f7; border-top: 1px solid #dcdcde; padding: 8px 8px 8px; }
.copy { display: block; line-height: 17px; margin-bottom: 1px; }
.publish-row { display: flex; justify-content: flex-end; }
.btn-primary { position: relative; width: 62px; height: 29px; border: 1px solid #fff; border-radius: 3px; background: #2f70b2; color: #dcecf8; font-size: 11.1px; padding: 0; }
.btn-primary::after { content: ""; position: absolute; inset: -6px -5px -6px -7px; border: 4px solid #f00; border-radius: 2px; }
.image-body { height: 36px; padding: 10px 0 0 8px; display: flex; align-items: flex-start; line-height: 17px; }
.help-side { margin: 2px 0 0 8px; }
.gallery-body { height: 41px; padding: 12.5px 0 0 10px; display: flex; align-items: flex-start; line-height: 17px; }
.box-gallery { margin-bottom: 20px; }
.box-cats { margin-bottom: 21px; }
.cats-body { padding: 8px 0 0 10px; height: 224px; }
.cat-tabs { display: flex; align-items: flex-end; height: 24px; }
.cat-tab { height: 24px; line-height: 21px; font-size: 11.1px; }
.cat-tab-on { width: 82px; text-align: center; border: 1px solid #dcdcde; border-bottom: 0; background: #fff; position: relative; top: 1px; z-index: 1; color: #50575e; line-height: 19px; }
.link-plain { margin-left: 9px; color: #2f70b2; }
.cat-list { width: 228px; height: 150px; border: 1px solid #dcdcde; padding: 12px 0 0 10px; }
.cat { height: 20.8px; display: flex; align-items: center; gap: 7px; color: #50575e; font-size: 11.1px; }
.add-cat { display: block; margin-top: 8px; line-height: 17px; font-weight: 700; }
.box-tags { margin-bottom: 0; height: 60px; }
```
